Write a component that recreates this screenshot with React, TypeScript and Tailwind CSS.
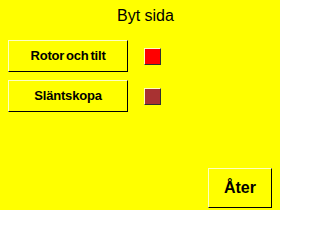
import React from "react";

function Btn({ children, className }: { children: React.ReactNode; className: string }) {
  return (
    <div
      className={
        "flex items-center justify-center bg-[#ffff00] border border-t-[#ffffc0] border-l-[#ffffc0] border-b-black border-r-black text-black font-bold " +
        className
      }
    >
      {children}
    </div>
  );
}

function Lamp({ color }: { color: string }) {
  return (
    <div
      className={
        "w-[17px] h-[17px] border border-t-[#ffffc0] border-l-[#ffffc0] border-b-[#303030] border-r-[#303030] " + color
      }
    />
  );
}

export default function App() {
  return (
    <div className="w-[280px] h-[210px] bg-[#ffff00] flex flex-col font-['Liberation_Sans',Arial,sans-serif] text-black overflow-hidden">
      <div className="mt-[8px] pl-[117px] text-[16px] leading-[16px]">Byt sida</div>
      <div className="mt-[16px] pl-[8px] flex flex-col gap-[8px]">
        <div className="flex items-center gap-[16px]">
          <Btn className="w-[120px] h-[32px] text-[13px] tracking-[-0.2px] [word-spacing:-1.5px]">Rotor och tilt</Btn>
          <Lamp color="bg-[#ff0000]" />
        </div>
        <div className="flex items-center gap-[16px]">
          <Btn className="w-[120px] h-[32px] text-[13px] tracking-[-0.2px]">Släntskopa</Btn>
          <Lamp color="bg-[#a83232]" />
        </div>
      </div>
      <div className="mt-auto mb-[2px] flex justify-end pr-[8px]">
        <Btn className="w-[64px] h-[40px] text-[16px]">Åter</Btn>
      </div>
    </div>
  );
}
